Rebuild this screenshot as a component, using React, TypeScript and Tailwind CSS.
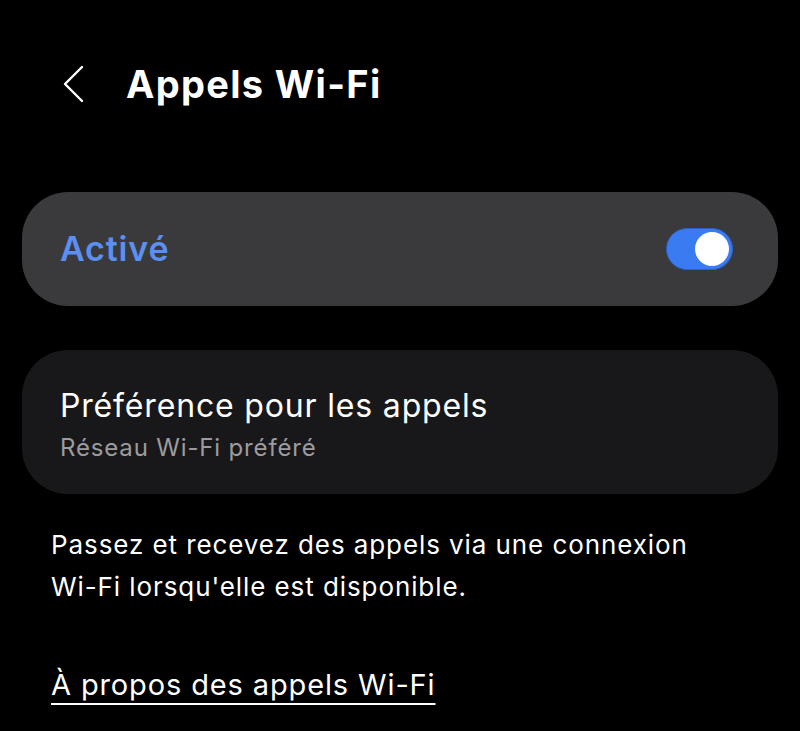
import React from "react";

export default function App() {
  return (
    <div
      className="w-[800px] h-[731px] bg-black text-white overflow-hidden"
      style={{ fontFamily: "Inter, Roboto, 'Noto Sans', sans-serif" }}
    >
      {/* Header */}
      <div className="flex items-center h-[60px] mt-[54px] pl-[62px]">
        <svg width="24" height="40" viewBox="0 0 24 40" className="shrink-0">
          <path d="M20 3 L3 20 L20 37" fill="none" stroke="white" strokeWidth="2.4" strokeLinecap="round" strokeLinejoin="round" />
        </svg>
        <h1 className="ml-[40px] text-[38px] leading-none font-bold tracking-[0.035em]">Appels Wi-Fi</h1>
      </div>

      {/* Card 1 */}
      <div className="mt-[78px] mx-[22px] h-[114px] rounded-[46px] bg-[#3a3a3c] flex items-center justify-between pl-[38px] pr-[45px]">
        <span className="text-[34px] font-semibold text-[#5b8ff2] leading-none tracking-[0.025em]">Activé</span>
        <div className="w-[67px] h-[42px] rounded-full bg-[#3b7bf2] border border-[#2d5fc4] flex items-center justify-end pr-[3px]">
          <div className="w-[34px] h-[34px] rounded-full bg-white" />
        </div>
      </div>

      {/* Card 2 */}
      <div className="mt-[44px] mx-[22px] h-[144px] rounded-[46px] bg-[#18181a] flex flex-col justify-center pl-[38px] pt-[8px]">
        <div className="text-[32px] leading-[40px] tracking-[0.026em]">Préférence pour les appels</div>
        <div className="mt-[4px] text-[24px] leading-[36px] text-[#9c9c9e] tracking-[0.035em]">Réseau Wi-Fi préféré</div>
      </div>

      {/* Description */}
      <div className="mt-[30px] pl-[51px] pr-[20px] text-[26px] leading-[42px] tracking-[0.035em] whitespace-nowrap">
        Passez et recevez des appels via une connexion
        <br />
        Wi-Fi lorsqu'elle est disponible.
      </div>

      {/* Link */}
      <div className="mt-[57px] pl-[51px]">
        <span className="text-[29px] leading-[40px] tracking-[0.03em] underline underline-offset-[8px] decoration-[2px]">À propos des appels Wi-Fi</span>
      </div>
    </div>
  );
}
